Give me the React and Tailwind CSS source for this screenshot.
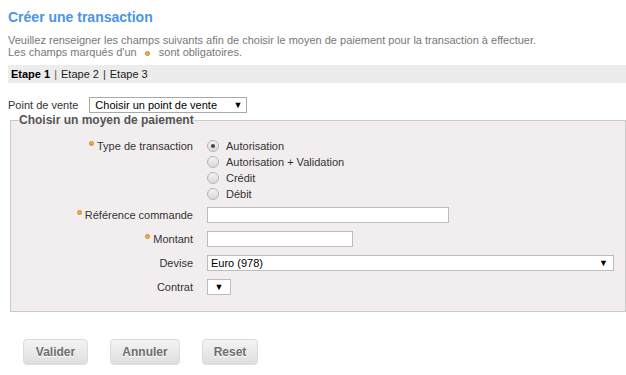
import React from "react";

const Bullet = ({ className = "" }) => (
  <span
    className={
      "inline-block w-[5px] h-[5px] rounded-full bg-[#f3b04a] border border-[#c98a2c] " +
      className
    }
  />
);

const Radio = ({ checked, label }) => (
  <div className="flex items-center h-[16px]">
    <span className="w-[12px] h-[12px] rounded-full border border-[#b5b5b5] bg-gradient-to-b from-[#f4f4f4] to-[#dadada] flex items-center justify-center">
      {checked && <span className="w-[4px] h-[4px] rounded-full bg-[#444]" />}
    </span>
    <span className="ml-[7px] text-[#333]">{label}</span>
  </div>
);

const Row = ({ label, required, children, h = "h-[16px]" }) => (
  <div className="flex">
    <div className={"w-[182px] flex justify-end items-center text-[#333] " + h}>
      {required && <Bullet className="mr-[3px] -mt-[5px]" />}
      <span>{label}</span>
    </div>
    <div className="ml-[14px]">{children}</div>
  </div>
);

export default function App() {
  return (
    <div className="w-[626px] h-[375px] bg-white overflow-hidden text-[11px] leading-[12px] text-[#333] font-['Liberation_Sans',Arial,sans-serif]">
      <div className="pl-[8px]">
        <h1 className="pt-[8px] text-[14px] leading-[18px] font-bold text-[#4995e5]">
          Créer une transaction
        </h1>
        <p className="mt-[8px] text-[#777] leading-[12px]">
          Veuillez renseigner les champs suivants afin de choisir le moyen de paiement pour la transaction à effectuer.
          <br />
          Les champs marqués d'un <span className="inline-block w-[16px] text-center"><Bullet /></span> sont obligatoires.
        </p>
        <div className="mt-[7px] h-[18px] bg-[#ececec] flex items-center pl-[3px] text-[#222]">
          <span className="font-bold text-black">Etape 1</span>
          <span className="text-[#8b4a2b] mx-[4px]">|</span>
          <span>Etape 2</span>
          <span className="text-[#333] mx-[4px]">|</span>
          <span>Etape 3</span>
        </div>
        <div className="mt-[14px] flex items-center h-[16px]">
          <span className="text-[#333]">Point de vente</span>
          <div className="ml-[11px] w-[158px] h-[16px] border border-[#a9a9a9] bg-white flex items-center justify-between pl-[5px] pr-[4px] text-black">
            <span>Choisir un point de vente</span>
            <span className="text-[9px]">▼</span>
          </div>
        </div>
      </div>
      <fieldset className="ml-[10px] mt-[1px] border border-[#cccccc] bg-[#f2eeef] pb-[16px] pt-[12px]">
        <legend className="ml-[8px] font-bold text-[#555] text-[12px] leading-[12px]">
          Choisir un moyen de paiement
        </legend>
        <div className="flex flex-col gap-[8px]">
          <div className="flex -mb-[3px]">
            <div className="w-[182px] h-[16px] flex justify-end items-center text-[#333]">
              <Bullet className="mr-[3px] -mt-[5px]" />
              <span>Type de transaction</span>
            </div>
            <div className="ml-[14px] flex flex-col">
              <Radio checked label="Autorisation" />
              <Radio label="Autorisation + Validation" />
              <Radio label="Crédit" />
              <Radio label="Débit" />
            </div>
          </div>
          <Row label="Référence commande" required>
            <div className="w-[242px] h-[16px] border border-[#bdbdbd] bg-white" />
          </Row>
          <Row label="Montant" required>
            <div className="w-[146px] h-[16px] border border-[#bdbdbd] bg-white" />
          </Row>
          <Row label="Devise">
            <div className="w-[407px] h-[16px] border border-[#bdbdbd] bg-white flex items-center justify-between pl-[3px] pr-[5px] text-black">
              <span>Euro (978)</span>
              <span className="text-[9px]">▼</span>
            </div>
          </Row>
          <Row label="Contrat">
            <div className="w-[24px] h-[16px] border border-[#bdbdbd] bg-white flex items-center justify-center text-black">
              <span className="text-[9px]">▼</span>
            </div>
          </Row>
        </div>
      </fieldset>
      <div className="flex gap-[22px] pl-[23px] mt-[27px]">
        {[
          ["Valider", "w-[65px]"],
          ["Annuler", "w-[70px]"],
          ["Reset", "w-[56px]"],
        ].map(([t, w]) => (
          <button
            key={t}
            className={
              w +
              " h-[26px] rounded-[4px] border border-[#dcdcdc] bg-gradient-to-b from-[#f4f4f4] to-[#dedede] font-bold text-[12px] text-[#6e6e6e] [text-shadow:0_1px_0_#fff]"
            }
          >
            {t}
          </button>
        ))}
      </div>
    </div>
  );
}
